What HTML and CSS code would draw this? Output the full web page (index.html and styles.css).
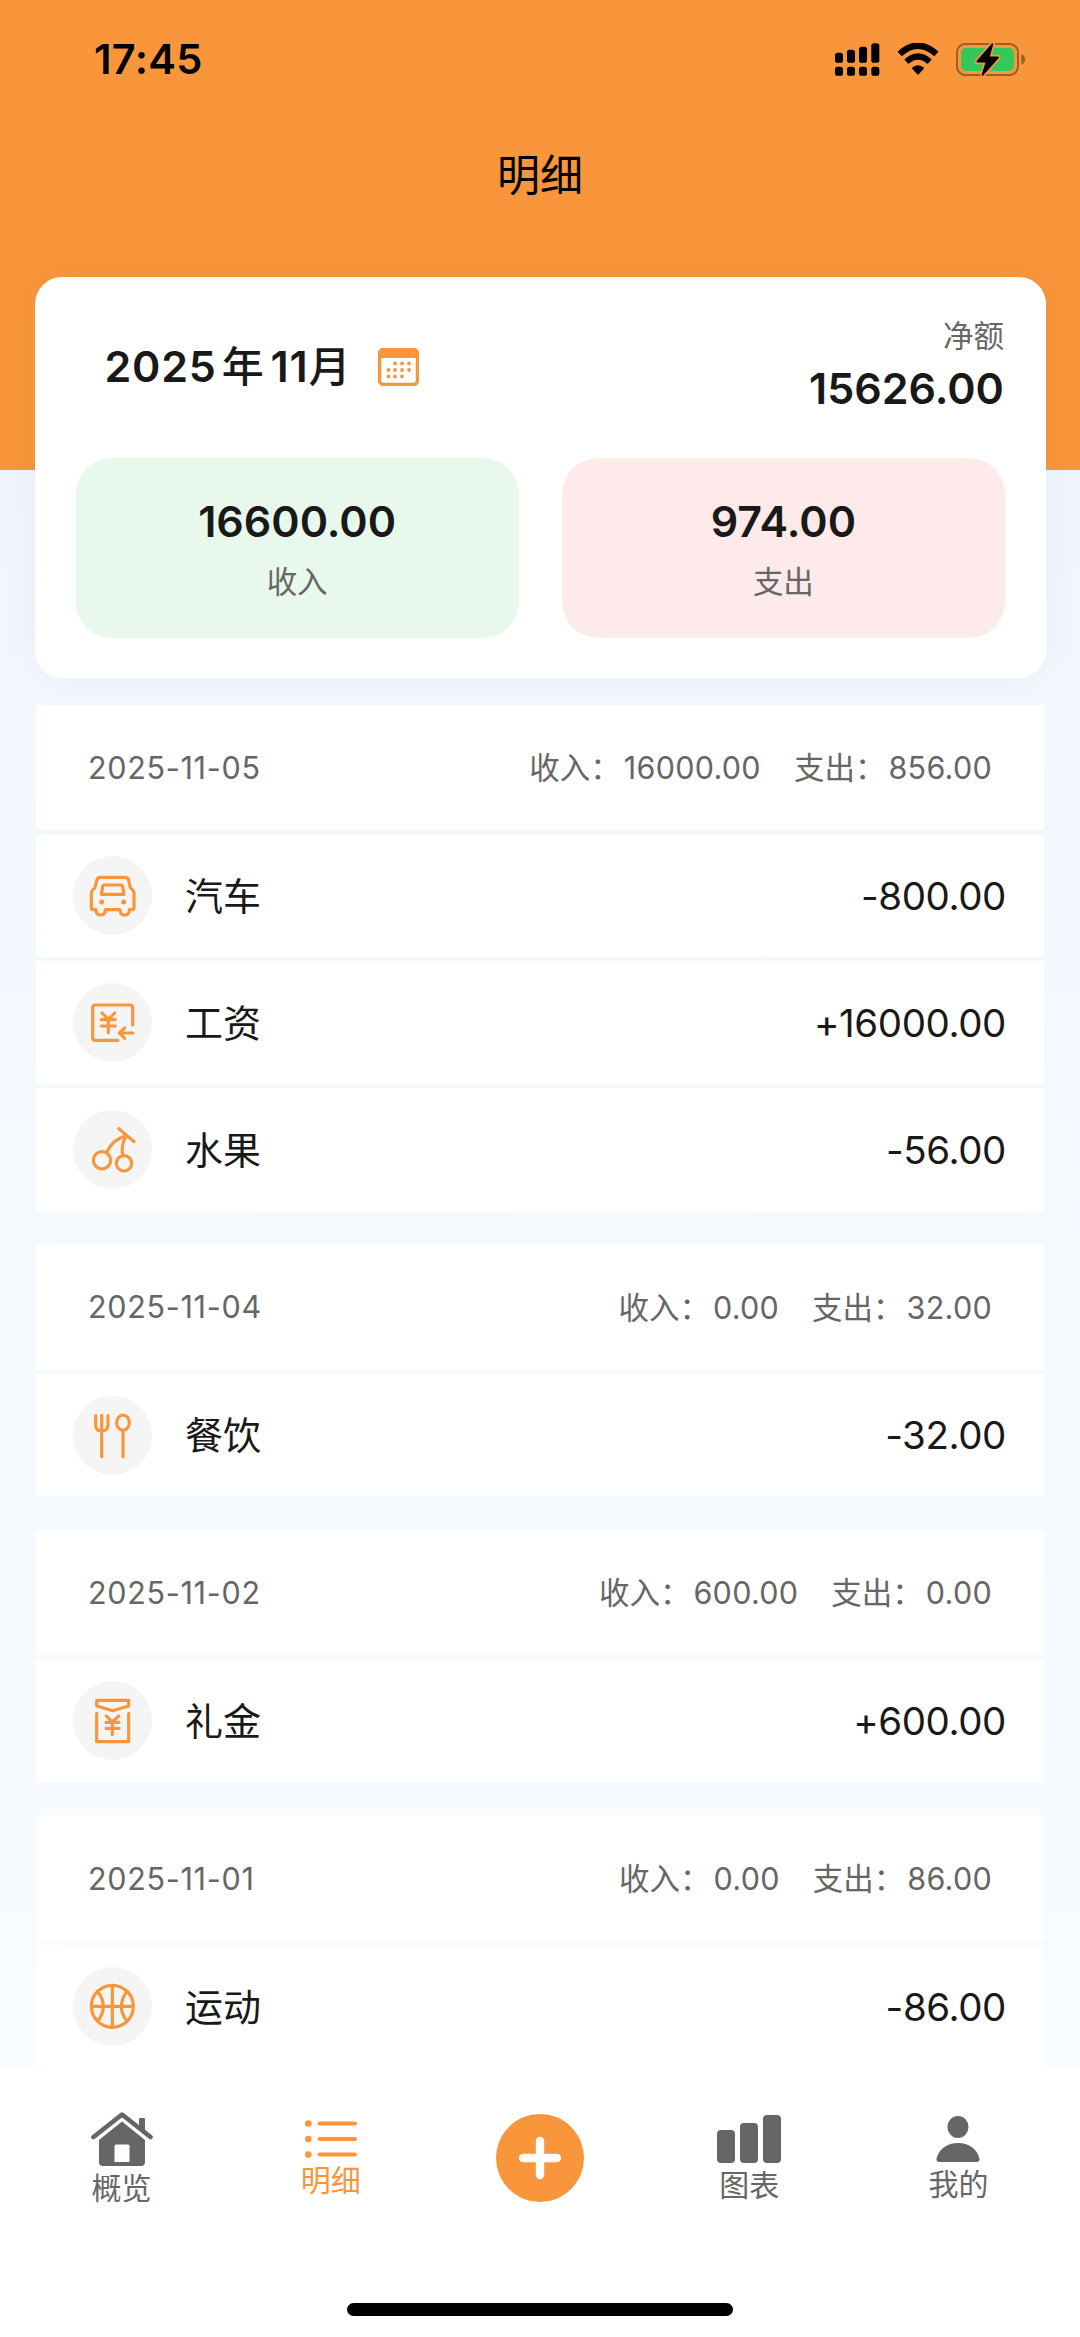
FILE: index.html
```html
<!DOCTYPE html>
<html lang="zh-CN">

<head>
    <meta charset="UTF-8">
    <meta name="viewport" content="width=device-width, initial-scale=1.0">
    <title>明细</title>
    <link rel="stylesheet" href="styles.css">
</head>

<body>
    <!-- 顶部 -->
    <div class="header">
        <!-- 状态栏 -->
        <div class="status">
            <span class="time">17:45</span>
            <div class="status-icons">
                <svg class="signal" viewBox="0 0 135 98">
                    <rect x="0" y="29" width="24" height="30" rx="8" />
                    <rect x="36" y="20" width="24" height="39" rx="8" />
                    <rect x="72" y="11" width="24" height="48" rx="8" />
                    <rect x="109" y="0" width="24" height="59" rx="8" />
                    <rect x="0" y="71" width="24" height="27" rx="8" />
                    <rect x="36" y="71" width="24" height="27" rx="8" />
                    <rect x="72" y="71" width="24" height="27" rx="8" />
                    <rect x="109" y="71" width="24" height="27" rx="8" />
                </svg>
                <svg class="wifi" viewBox="0 0 126 96">
                    <path d="M8 33Q63-17 118 33" fill="none" stroke="#000" stroke-width="19" />
                    <path d="M28 56Q63 25 98 56" fill="none" stroke="#000" stroke-width="18" />
                    <path d="M44 75Q63 59 82 75L66 93Q63 96 60 93Z" />
                </svg>
                <svg class="battery" viewBox="0 0 206 98">
                    <rect x="3" y="3" width="182" height="92" rx="24" fill="none" stroke="#9c5f26" stroke-width="6" />
                    <path d="M195 33q11 4 11 16t-11 15z" fill="#9c5f26" />
                    <rect x="15" y="15" width="158" height="68" rx="14" fill="#34c759" />
                    <path d="M107 1L62 53q-3 5 3 5H88L77 93q-1 6 4 4L127 45q3-5-3-5H101L111 4q0-5-4-3z" stroke="#f9963b" stroke-width="10" paint-order="stroke" />
                </svg>
            </div>
        </div>
        <h1>明细</h1>
    </div>

    <!-- 月度汇总 -->
    <div class="card">
        <div class="card-top">
            <div class="month">
                <span>2025<i>年</i>11<i class="last">月</i></span>
                <svg class="calendar" viewBox="0 0 41 38">
                    <rect x="1.5" y="1.5" width="38" height="35" rx="4" fill="#fff" stroke="#f9963b" stroke-width="3.4" />
                    <path d="M1 10V5q0-4 4-4h31q4 0 4 4v5z" fill="#f9963b" />
                    <path d="M17 15.5h.01M24 15.5h.01M31 15.5h.01M10.5 22h.01M17 22h.01M24 22h.01M31 22h.01M10.5 28.5h.01M17 28.5h.01M24 28.5h.01" stroke="#f9963b" stroke-width="3.8" stroke-linecap="round" />
                </svg>
            </div>
            <div class="net">
                <p>净额</p>
                <strong>15626.00</strong>
            </div>
        </div>
        <div class="totals">
            <div class="total in">
                <strong>16600.00</strong>
                <p>收入</p>
            </div>
            <div class="total out">
                <strong>974.00</strong>
                <p>支出</p>
            </div>
        </div>
    </div>

    <!-- 明细列表 -->
    <div class="list">
        <ul>
            <li class="day"><span class="date">2025-11-05</span><span class="sum">收入：<b>16000.00</b></span><span class="sum">支出：<b>856.00</b></span></li>
            <li>
                <svg class="icon" viewBox="0 0 237 237">
                    <path d="M82 64H156q9 0 11 9l4 18q1 6 6 9q6 4 6 12V156q0 5-5 5h-9q0 16-14 16t-14-16H97q0 16-14 16t-14-16H60q-5 0-5-5V112q0-8 6-12q5-3 6-9l4-18q2-9 11-9z" />
                    <path d="M94 87H144q4 0 5 5l4 23H85l4-23q1-5 5-5z" />
                    <path d="M86 138h.1M152 138h.1" stroke-width="15" />
                </svg>
                <span class="name">汽车</span><span class="money">-800.00</span>
            </li>
            <li>
                <svg class="icon" viewBox="0 0 237 237">
                    <path d="M135 172H67q-8 0-8-8V74q0-8 8-8H171q8 0 8 8V126" />
                    <path d="M180 150H140M155 135L139 150L155 166" />
                    <path d="M87 90L106 109L125 90M106 109V149M85 110H127M85 129H127" />
                </svg>
                <span class="name">工资</span><span class="money">+16000.00</span>
            </li>
            <li>
                <svg class="icon" viewBox="0 0 237 237">
                    <circle cx="87" cy="151" r="26" />
                    <circle cx="153" cy="160" r="23" />
                    <path d="M101 127Q120 86 162 77M149 136Q143 104 160 78M137 56L183 95" />
                </svg>
                <span class="name">水果</span><span class="money">-56.00</span>
            </li>
        </ul>
        <ul>
            <li class="day"><span class="date">2025-11-04</span><span class="sum">收入：<b>0.00</b></span><span class="sum">支出：<b>32.00</b></span></li>
            <li>
                <svg class="icon" viewBox="0 0 237 237">
                    <path d="M68 59V87q0 18 18 18t19-18V59M86 58V182" />
                    <ellipse cx="150" cy="80" rx="19" ry="23" />
                    <path d="M150 103V182" />
                </svg>
                <span class="name">餐饮</span><span class="money">-32.00</span>
            </li>
        </ul>
        <ul>
            <li class="day"><span class="date">2025-11-02</span><span class="sum">收入：<b>600.00</b></span><span class="sum">支出：<b>0.00</b></span></li>
            <li>
                <svg class="icon" viewBox="0 0 237 237">
                    <path d="M71 58H167V75L119 89L71 75Z" />
                    <path d="M71 97V182H167V97" />
                    <path d="M100 105L118 123L137 105M118 123V161M99 124H138M99 142H138" />
                </svg>
                <span class="name">礼金</span><span class="money">+600.00</span>
            </li>
        </ul>
        <ul>
            <li class="day"><span class="date">2025-11-01</span><span class="sum">收入：<b>0.00</b></span><span class="sum">支出：<b>86.00</b></span></li>
            <li>
                <svg class="icon" viewBox="0 0 237 237">
                    <circle cx="118" cy="118" r="63" />
                    <path d="M118 55V181M55 118H181M74 73Q108 118 74 163M162 73Q128 118 162 163" />
                </svg>
                <span class="name">运动</span><span class="money">-86.00</span>
            </li>
        </ul>
    </div>

    <!-- 底部导航 -->
    <div class="tabbar">
        <div class="tabs">
            <a href="#">
                <svg width="62" height="54" viewBox="0 0 62 54">
                    <path d="M8 28L31 9.5L54 28V50q0 4-4 4H12q-4 0-4-4zM25 32.5q-1.500 0-1.500 1.500V50H38.500V34q0-1.500-1.500-1.500z" fill-rule="evenodd" />
                    <path d="M48 17V7q0-1 1-1h4q1 0 1 1V21" />
                    <path d="M2.500 25L31 2.500L59.500 25" fill="none" stroke="#666" stroke-width="4.600" stroke-linecap="round" stroke-linejoin="round" />
                </svg>
                概览
            </a>
            <a href="#" class="current">
                <svg width="52" height="38" viewBox="0 0 52 38">
                    <path d="M14.500 3.500H50M14.500 19H50M14.500 34.500H50" stroke="#f9963b" stroke-width="4" stroke-linecap="round" />
                    <circle cx="3.300" cy="3.500" r="3.300" />
                    <circle cx="3.300" cy="19" r="3.300" />
                    <circle cx="3.300" cy="34.500" r="3.300" />
                </svg>
                明细
            </a>
            <a href="#">
                <svg class="add" width="88" height="88" viewBox="0 0 88 88">
                    <circle cx="44" cy="44" r="44" />
                    <path d="M27 44H61M44 27V61" stroke="#fff" stroke-width="8.400" stroke-linecap="round" />
                </svg>
            </a>
            <a href="#">
                <svg width="64" height="48" viewBox="0 0 64 48">
                    <rect x="0" y="15" width="18" height="33" rx="4" />
                    <rect x="23" y="8" width="18" height="40" rx="4" />
                    <rect x="46" y="0" width="18" height="48" rx="4" />
                </svg>
                图表
            </a>
            <a href="#">
                <svg width="44" height="46" viewBox="0 0 44 46">
                    <ellipse cx="22" cy="11" rx="10.500" ry="11" />
                    <path d="M4 46q-4 0-3.500-3.500C3 33 11 27 22 27s19 6 21.500 15.500Q44 46 40 46z" />
                </svg>
                我的
            </a>
        </div>
        <div class="home-bar"></div>
    </div>
</body>

</html>
```

FILE: styles.css
```css
* {
    padding: 0;
    margin: 0;
    box-sizing: border-box;
}

body {
    width: 1080px;
    height: 2337px;
    display: flex;
    flex-direction: column;
    overflow: hidden;
    font-family: Inter, "Noto Sans CJK SC", sans-serif;
    color: #191919;
    background: linear-gradient(#f0f4fd 470px, #f3f8fe 720px, #f5faff 1500px, #f8fbff 2067px);
}

a {
    text-decoration: none;
}

ul,
li {
    list-style: none;
}

i,
b {
    font-style: normal;
    font-weight: normal;
}

.header {
    flex: none;
    height: 469.5px;
    background-color: #f9963b;
    color: #000;
}

.status {
    display: flex;
    justify-content: space-between;
    height: 118px;
    padding: 0 55px 0 94px;
    align-items: center;
}

.time {
    font-size: 41.5px;
    font-weight: 600;
    letter-spacing: .3px;
}

.status-icons {
    display: flex;
    align-items: center;
    gap: 17px;
}

.signal {
    width: 45px;
    height: 33px;
}

.wifi {
    width: 42px;
    height: 32px;
}

.battery {
    width: 69px;
    height: 33px;
    overflow: visible;
}

h1 {
    font-size: 43px;
    font-weight: 400;
    line-height: 60px;
    margin-top: 27px;
    text-align: center;
}

/* 汇总卡片 */
.card {
    flex: none;
    width: 1011.5px;
    height: 401.5px;
    margin: -193px 0 0 34.5px;
    padding: 0 41px;
    background-color: #fff;
    border-radius: 27px;
    box-shadow: 0 0 40px rgba(60, 60, 60, .04);
}

.card-top {
    display: flex;
    justify-content: space-between;
    height: 181px;
    padding: 0 1px 0 29px;
}

.month {
    display: flex;
    align-items: center;
    gap: 27px;
    font-size: 43px;
    font-weight: 600;
    letter-spacing: .8px;
}

.month span {
    padding-bottom: 7px;
}

.month i {
    font-size: 42px;
    font-weight: 500;
    margin: 0 6px 0 5px;
}

.month .last {
    margin: 0;
}

.calendar {
    width: 41px;
    height: 38px;
}

.net {
    padding-top: 37px;
    text-align: right;
}

.net p,
.total p {
    font-size: 30.5px;
    line-height: 44px;
    color: #666;
}

.net strong,
.total strong {
    display: block;
    font-size: 43px;
    line-height: 60px;
    font-weight: 600;
}

.totals {
    display: grid;
    grid-template-columns: 1fr 1fr;
    gap: 43px;
}

.total {
    height: 180px;
    padding-top: 33px;
    border-radius: 36px;
    text-align: center;
}

.total p {
    margin-top: 9px;
}

.in {
    background-color: #e8f8ec;
}

.out {
    background-color: #feeaea;
}

/* 明细列表 */
.list {
    flex: none;
    height: 1389.5px;
    padding: 26.5px 36px 0;
    overflow: hidden;
}

.list ul {
    margin-bottom: 33.2px;
}

.list li {
    display: flex;
    align-items: center;
    height: 122.4px;
    margin-top: 4.5px;
    padding: 0 38px 0 37px;
    background-color: #fff;
}

.list .day {
    height: 125.6px;
    margin-top: 0;
    padding: 0 52px;
    font-size: 30.5px;
    color: #666;
}

.date {
    margin-right: auto;
    letter-spacing: .7px;
}

.sum {
    margin-left: 33px;
    padding-bottom: 2px;
}

.sum b {
    margin-left: 3px;
    letter-spacing: .3px;
}

.icon {
    width: 79px;
    height: 79px;
    background-color: #f5f5f5;
    border-radius: 50%;
    fill: none;
    stroke: #f9963b;
    stroke-width: 9.5;
    stroke-linecap: round;
    stroke-linejoin: round;
}

.name {
    margin: 0 auto 0 33px;
    padding-bottom: 5px;
    font-size: 38px;
}

.money {
    font-size: 38.5px;
    letter-spacing: -.4px;
}

/* 底部导航 */
.tabbar {
    flex: 1;
    background-color: #fff;
}

.tabs {
    display: grid;
    grid-template-columns: repeat(5, 1fr);
    height: 181px;
    padding: 0 17px;
}

.tabs a {
    display: flex;
    flex-direction: column;
    align-items: center;
    justify-content: center;
    gap: 7px;
    font-size: 30px;
    line-height: 31px;
    color: #666;
    fill: #666;
}

.tabs .current {
    color: #f9963b;
    fill: #f9963b;
}

.add {
    fill: #f9963b;
}

.home-bar {
    width: 386px;
    height: 13px;
    margin: 54px auto 0;
    background-color: #000;
    border-radius: 7px;
}
```
